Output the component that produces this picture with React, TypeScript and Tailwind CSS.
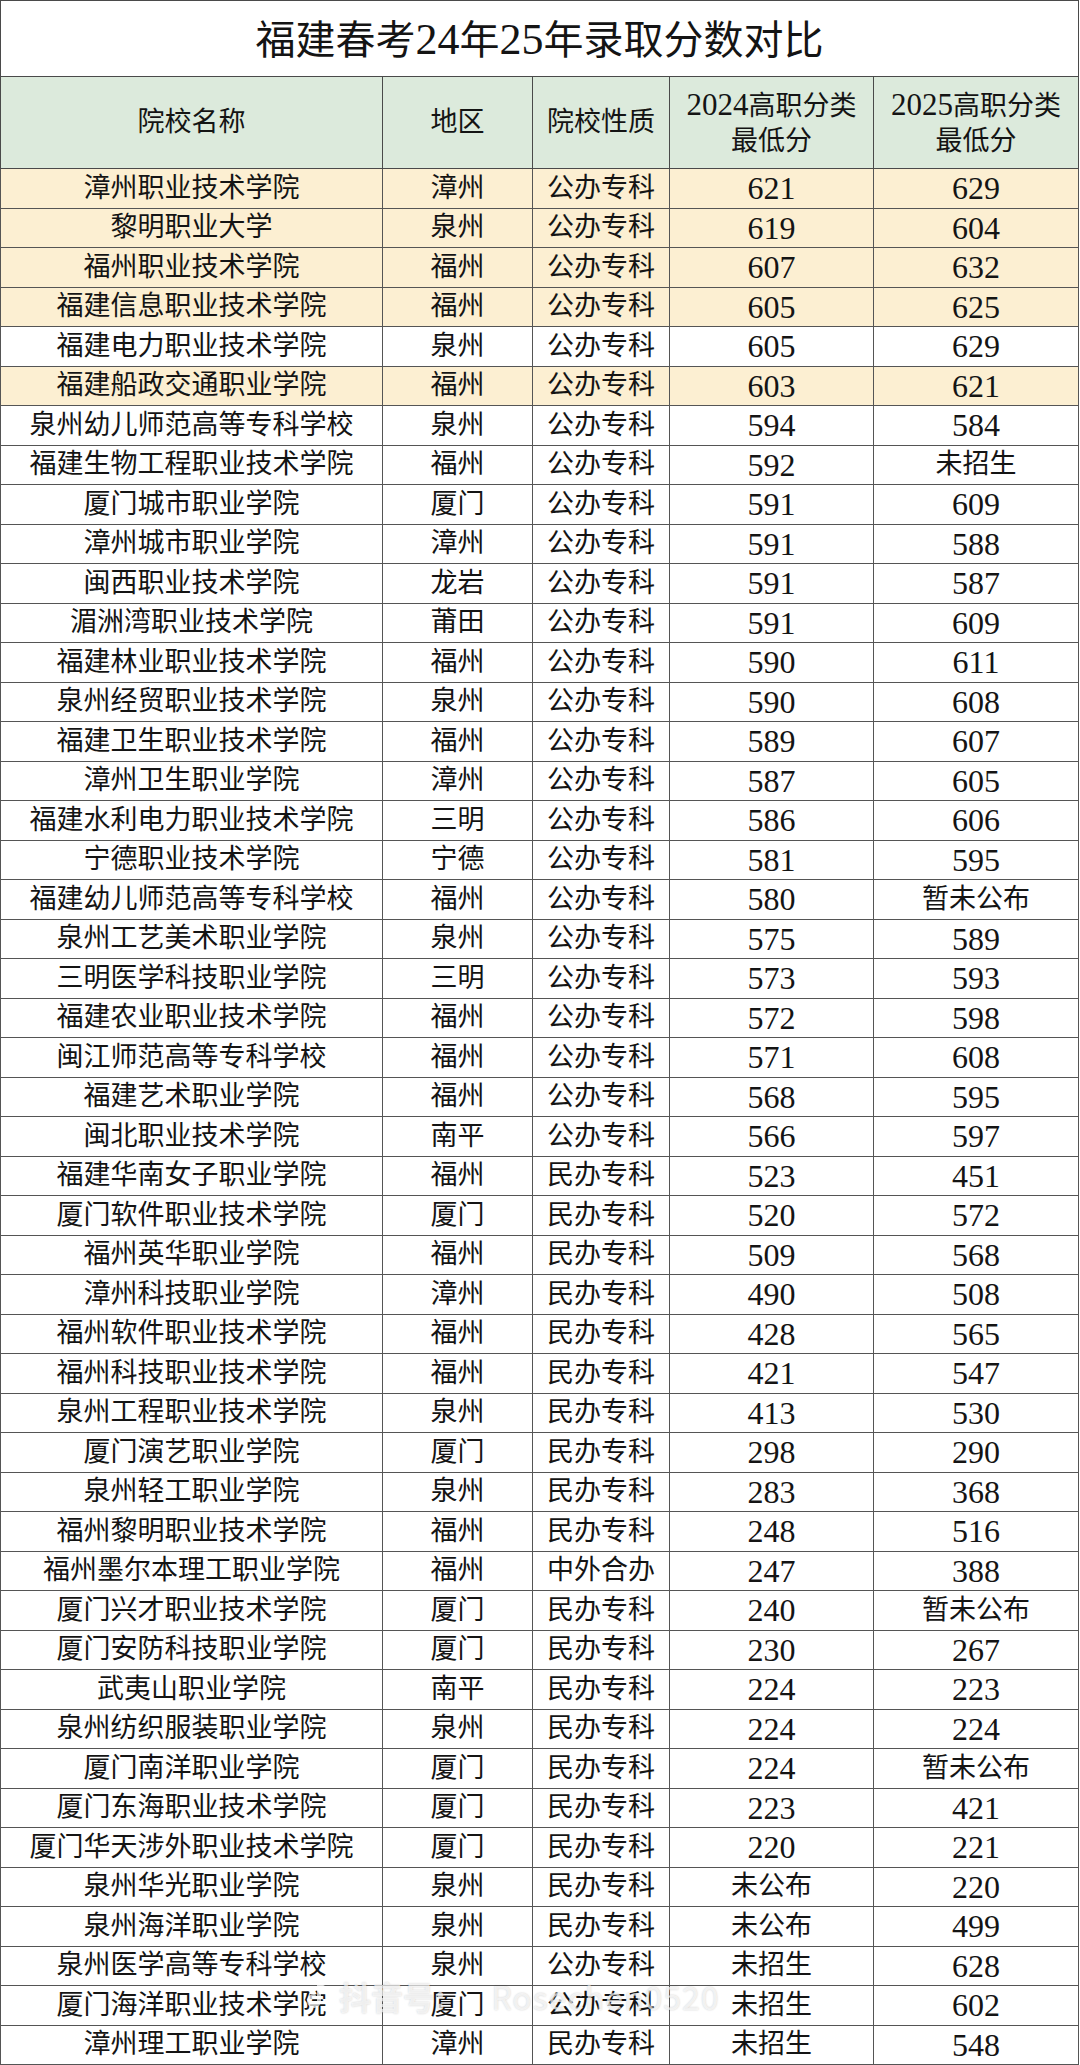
import React from "react";

type Row = [string, string, string, string, string, boolean?];

const rows: Row[] = [
  ["漳州职业技术学院", "漳州", "公办专科", "621", "629", true],
  ["黎明职业大学", "泉州", "公办专科", "619", "604", true],
  ["福州职业技术学院", "福州", "公办专科", "607", "632", true],
  ["福建信息职业技术学院", "福州", "公办专科", "605", "625", true],
  ["福建电力职业技术学院", "泉州", "公办专科", "605", "629"],
  ["福建船政交通职业学院", "福州", "公办专科", "603", "621", true],
  ["泉州幼儿师范高等专科学校", "泉州", "公办专科", "594", "584"],
  ["福建生物工程职业技术学院", "福州", "公办专科", "592", "未招生"],
  ["厦门城市职业学院", "厦门", "公办专科", "591", "609"],
  ["漳州城市职业学院", "漳州", "公办专科", "591", "588"],
  ["闽西职业技术学院", "龙岩", "公办专科", "591", "587"],
  ["湄洲湾职业技术学院", "莆田", "公办专科", "591", "609"],
  ["福建林业职业技术学院", "福州", "公办专科", "590", "611"],
  ["泉州经贸职业技术学院", "泉州", "公办专科", "590", "608"],
  ["福建卫生职业技术学院", "福州", "公办专科", "589", "607"],
  ["漳州卫生职业学院", "漳州", "公办专科", "587", "605"],
  ["福建水利电力职业技术学院", "三明", "公办专科", "586", "606"],
  ["宁德职业技术学院", "宁德", "公办专科", "581", "595"],
  ["福建幼儿师范高等专科学校", "福州", "公办专科", "580", "暂未公布"],
  ["泉州工艺美术职业学院", "泉州", "公办专科", "575", "589"],
  ["三明医学科技职业学院", "三明", "公办专科", "573", "593"],
  ["福建农业职业技术学院", "福州", "公办专科", "572", "598"],
  ["闽江师范高等专科学校", "福州", "公办专科", "571", "608"],
  ["福建艺术职业学院", "福州", "公办专科", "568", "595"],
  ["闽北职业技术学院", "南平", "公办专科", "566", "597"],
  ["福建华南女子职业学院", "福州", "民办专科", "523", "451"],
  ["厦门软件职业技术学院", "厦门", "民办专科", "520", "572"],
  ["福州英华职业学院", "福州", "民办专科", "509", "568"],
  ["漳州科技职业学院", "漳州", "民办专科", "490", "508"],
  ["福州软件职业技术学院", "福州", "民办专科", "428", "565"],
  ["福州科技职业技术学院", "福州", "民办专科", "421", "547"],
  ["泉州工程职业技术学院", "泉州", "民办专科", "413", "530"],
  ["厦门演艺职业学院", "厦门", "民办专科", "298", "290"],
  ["泉州轻工职业学院", "泉州", "民办专科", "283", "368"],
  ["福州黎明职业技术学院", "福州", "民办专科", "248", "516"],
  ["福州墨尔本理工职业学院", "福州", "中外合办", "247", "388"],
  ["厦门兴才职业技术学院", "厦门", "民办专科", "240", "暂未公布"],
  ["厦门安防科技职业学院", "厦门", "民办专科", "230", "267"],
  ["武夷山职业学院", "南平", "民办专科", "224", "223"],
  ["泉州纺织服装职业学院", "泉州", "民办专科", "224", "224"],
  ["厦门南洋职业学院", "厦门", "民办专科", "224", "暂未公布"],
  ["厦门东海职业技术学院", "厦门", "民办专科", "223", "421"],
  ["厦门华天涉外职业技术学院", "厦门", "民办专科", "220", "221"],
  ["泉州华光职业学院", "泉州", "民办专科", "未公布", "220"],
  ["泉州海洋职业学院", "泉州", "民办专科", "未公布", "499"],
  ["泉州医学高等专科学校", "泉州", "公办专科", "未招生", "628"],
  ["厦门海洋职业技术学院", "厦门", "公办专科", "未招生", "602"],
  ["漳州理工职业学院", "漳州", "民办专科", "未招生", "548"],
];

const font = {
  fontFamily: '"Liberation Serif", "Noto Sans CJK SC", serif',
};

function Cell({ v }: { v: string }) {
  const num = /^\d+$/.test(v);
  return (
    <td className={`border border-[#555] text-center ${num ? "text-[32px]" : "text-[27px]"}`}>{v}</td>
  );
}

export default function App() {
  return (
    <div className="relative w-[1080px] h-[2065px] bg-white text-[#141414]" style={font}>
      <table className="table-fixed border-collapse w-[1078px]">
        <colgroup>
          <col className="w-[382px]" />
          <col className="w-[150px]" />
          <col className="w-[137px]" />
          <col className="w-[204px]" />
          <col className="w-[205px]" />
        </colgroup>
        <thead>
          <tr className="h-[76px]">
            <th colSpan={5} className="border border-[#4a4a4a] bg-white font-normal text-[40px] text-center pt-[2px]">
              福建春考<span className="text-[44px]">24</span>年<span className="text-[44px]">25</span>年录取分数对比
            </th>
          </tr>
          <tr className="h-[92px] bg-[#dceadc] text-[27px] leading-[35px]">
            <th className="border border-[#4a4a4a] font-normal">院校名称</th>
            <th className="border border-[#4a4a4a] font-normal">地区</th>
            <th className="border border-[#4a4a4a] font-normal">院校性质</th>
            <th className="border border-[#4a4a4a] font-normal">
              <span className="text-[31px]">2024</span>高职分类
              <br />
              最低分
            </th>
            <th className="border border-[#4a4a4a] font-normal">
              <span className="text-[31px]">2025</span>高职分类
              <br />
              最低分
            </th>
          </tr>
        </thead>
        <tbody className="leading-none">
          {rows.map((r, i) => (
            <tr key={i} className={`h-[39.5px] ${r[5] ? "bg-[#fcefd2]" : "bg-white"}`}>
              <Cell v={r[0]} />
              <Cell v={r[1]} />
              <Cell v={r[2]} />
              <Cell v={r[3]} />
              <Cell v={r[4]} />
            </tr>
          ))}
        </tbody>
      </table>

      <div
        className="absolute left-[305px] top-[1972px] flex items-center gap-[6px] text-white/70 text-[32px] font-bold pointer-events-none"
        style={{ fontFamily: '"Noto Sans CJK SC", "Liberation Sans", sans-serif', textShadow: "0 0 2px rgba(0,0,0,0.2)" }}
      >
        <svg width="28" height="34" viewBox="0 0 28 34" className="opacity-70">
          <path
            d="M14 2v20a5 5 0 1 1-5-5M14 2c1 5 5 8 10 8"
            fill="none"
            stroke="white"
            strokeWidth="4"
            strokeLinecap="round"
          />
        </svg>
        <span>抖音号: </span>
        <span className="ml-[40px] font-normal tracking-[1px]">Rosechen0520</span>
      </div>
    </div>
  );
}
